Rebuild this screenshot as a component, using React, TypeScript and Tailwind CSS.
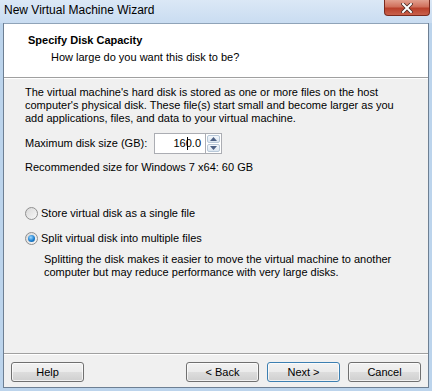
import React, { useState } from "react";

const font = { fontFamily: '"Liberation Sans", Arial, sans-serif' };

function Radio({ checked }: { checked: boolean }) {
  return (
    <span className="relative inline-flex w-[13px] h-[13px] rounded-full border border-[#8f8f8f] bg-gradient-to-br from-[#d8d8d8] to-[#f8f8f8] items-center justify-center shrink-0">
      {checked && (
        <span className="w-[7px] h-[7px] rounded-full bg-[radial-gradient(circle_at_40%_35%,#9fd9ff,#1b7fd0_55%,#0d4f8e)]" />
      )}
    </span>
  );
}

function Button({ label, primary }: { label: string; primary?: boolean }) {
  return (
    <button
      className={`w-[73px] h-[20px] rounded-[3px] border text-[11px] text-black leading-none bg-[linear-gradient(#f2f2f2_0%,#ebebeb_48%,#dddddd_52%,#cfcfcf_100%)] shadow-[inset_0_0_0_1px_rgba(255,255,255,0.7)] ${
        primary ? "border-[#3c7fb1]" : "border-[#707070]"
      }`}
      style={font}
    >
      {label}
    </button>
  );
}

export default function App() {
  const [split, setSplit] = useState(true);

  return (
    <div
      className="w-[432px] h-[391px] overflow-hidden flex flex-col bg-[#bcd4ec] text-black"
      style={font}
    >
      {/* title bar */}
      <div className="h-[23px] shrink-0 flex items-start justify-between bg-[linear-gradient(#dbe8f6,#c9dcf1)]">
        <span className="pl-[4px] pt-[3px] text-[12px] leading-[15px] text-black">
          New Virtual Machine Wizard
        </span>
        <div className="mr-[2px] w-[46px] h-[16px] rounded-b-[4px] border border-t-0 border-[#7a2a1e] bg-[linear-gradient(#e2a08f_0%,#d0705c_45%,#b9402b_55%,#c9614c_100%)] flex items-center justify-center">
          <svg width="12" height="10" viewBox="0 0 12 10">
            <path
              d="M2 1 L10 9 M10 1 L2 9"
              stroke="#4a2a24"
              strokeWidth="3.6"
              strokeLinecap="square"
            />
            <path
              d="M2 1 L10 9 M10 1 L2 9"
              stroke="#ffffff"
              strokeWidth="2"
              strokeLinecap="square"
            />
          </svg>
        </div>
      </div>

      {/* client */}
      <div className="flex-1 mx-[3px] mb-[3px] flex flex-col border border-[#6d7f93] border-t-0 bg-[#f0f0f0]">
        <div className="h-[55px] shrink-0 bg-white border-t border-[#8fa3b8] border-b border-b-[#a0a0a0] pt-[8px]">
          <div className="pl-[24px] text-[11px] leading-[17px] font-bold">
            Specify Disk Capacity
          </div>
          <div className="pl-[47px] text-[11px] leading-[17px]">
            How large do you want this disk to be?
          </div>
        </div>
        <div className="border-t border-white" />

        <div className="flex-1 pl-[21px] pt-[7px] text-[11px] leading-[13px]">
          <p>
            The virtual machine's hard disk is stored as one or more files on the host
            <br />
            computer's physical disk. These file(s) start small and become larger as you
            <br />
            add applications, files, and data to your virtual machine.
          </p>

          <div className="mt-[8px] flex items-center h-[21px]">
            <span className="w-[129px]">Maximum disk size (GB):</span>
            <div className="flex h-[21px]">
              <div className="w-[51px] h-[21px] border border-[#abadb3] border-r-0 bg-white flex items-center justify-end pr-[4px]">
                <span>16</span>
                <span className="inline-block w-px h-[13px] bg-black -mr-[2px] ml-[1px]" />
                <span>0.0</span>
              </div>
              <div className="w-[17px] h-[21px] border border-[#abadb3] bg-white flex flex-col p-px gap-px">
                <div className="flex-1 rounded-[2px] border border-[#b8c8d8] bg-[linear-gradient(#f4f8fc,#dce6f0)] flex items-center justify-center">
                  <svg width="7" height="4" viewBox="0 0 7 4">
                    <path d="M0 4 L3.5 0 L7 4 Z" fill="#4d6185" />
                  </svg>
                </div>
                <div className="flex-1 rounded-[2px] border border-[#b8c8d8] bg-[linear-gradient(#f4f8fc,#dce6f0)] flex items-center justify-center">
                  <svg width="7" height="4" viewBox="0 0 7 4">
                    <path d="M0 0 L3.5 4 L7 0 Z" fill="#4d6185" />
                  </svg>
                </div>
              </div>
            </div>
          </div>

          <p className="mt-[7px]">Recommended size for Windows 7 x64: 60 GB</p>

          <label
            className="mt-[32px] flex items-center gap-[3px] h-[14px]"
            onClick={() => setSplit(false)}
          >
            <Radio checked={!split} />
            <span>Store virtual disk as a single file</span>
          </label>
          <label
            className="mt-[11px] flex items-center gap-[3px] h-[14px]"
            onClick={() => setSplit(true)}
          >
            <Radio checked={split} />
            <span>Split virtual disk into multiple files</span>
          </label>
          <p className="mt-[8px] pl-[19px]">
            Splitting the disk makes it easier to move the virtual machine to another
            <br />
            computer but may reduce performance with very large disks.
          </p>
        </div>

        <div className="border-t border-[#a0a0a0]" />
        <div className="border-t border-white" />
        <div className="h-[32px] shrink-0 flex items-start pt-[7px] px-[7px]">
          <Button label="Help" />
          <div className="flex-1" />
          <div className="flex gap-[8px]">
            <Button label="< Back" />
            <Button label="Next >" primary />
            <Button label="Cancel" />
          </div>
        </div>
      </div>
    </div>
  );
}
